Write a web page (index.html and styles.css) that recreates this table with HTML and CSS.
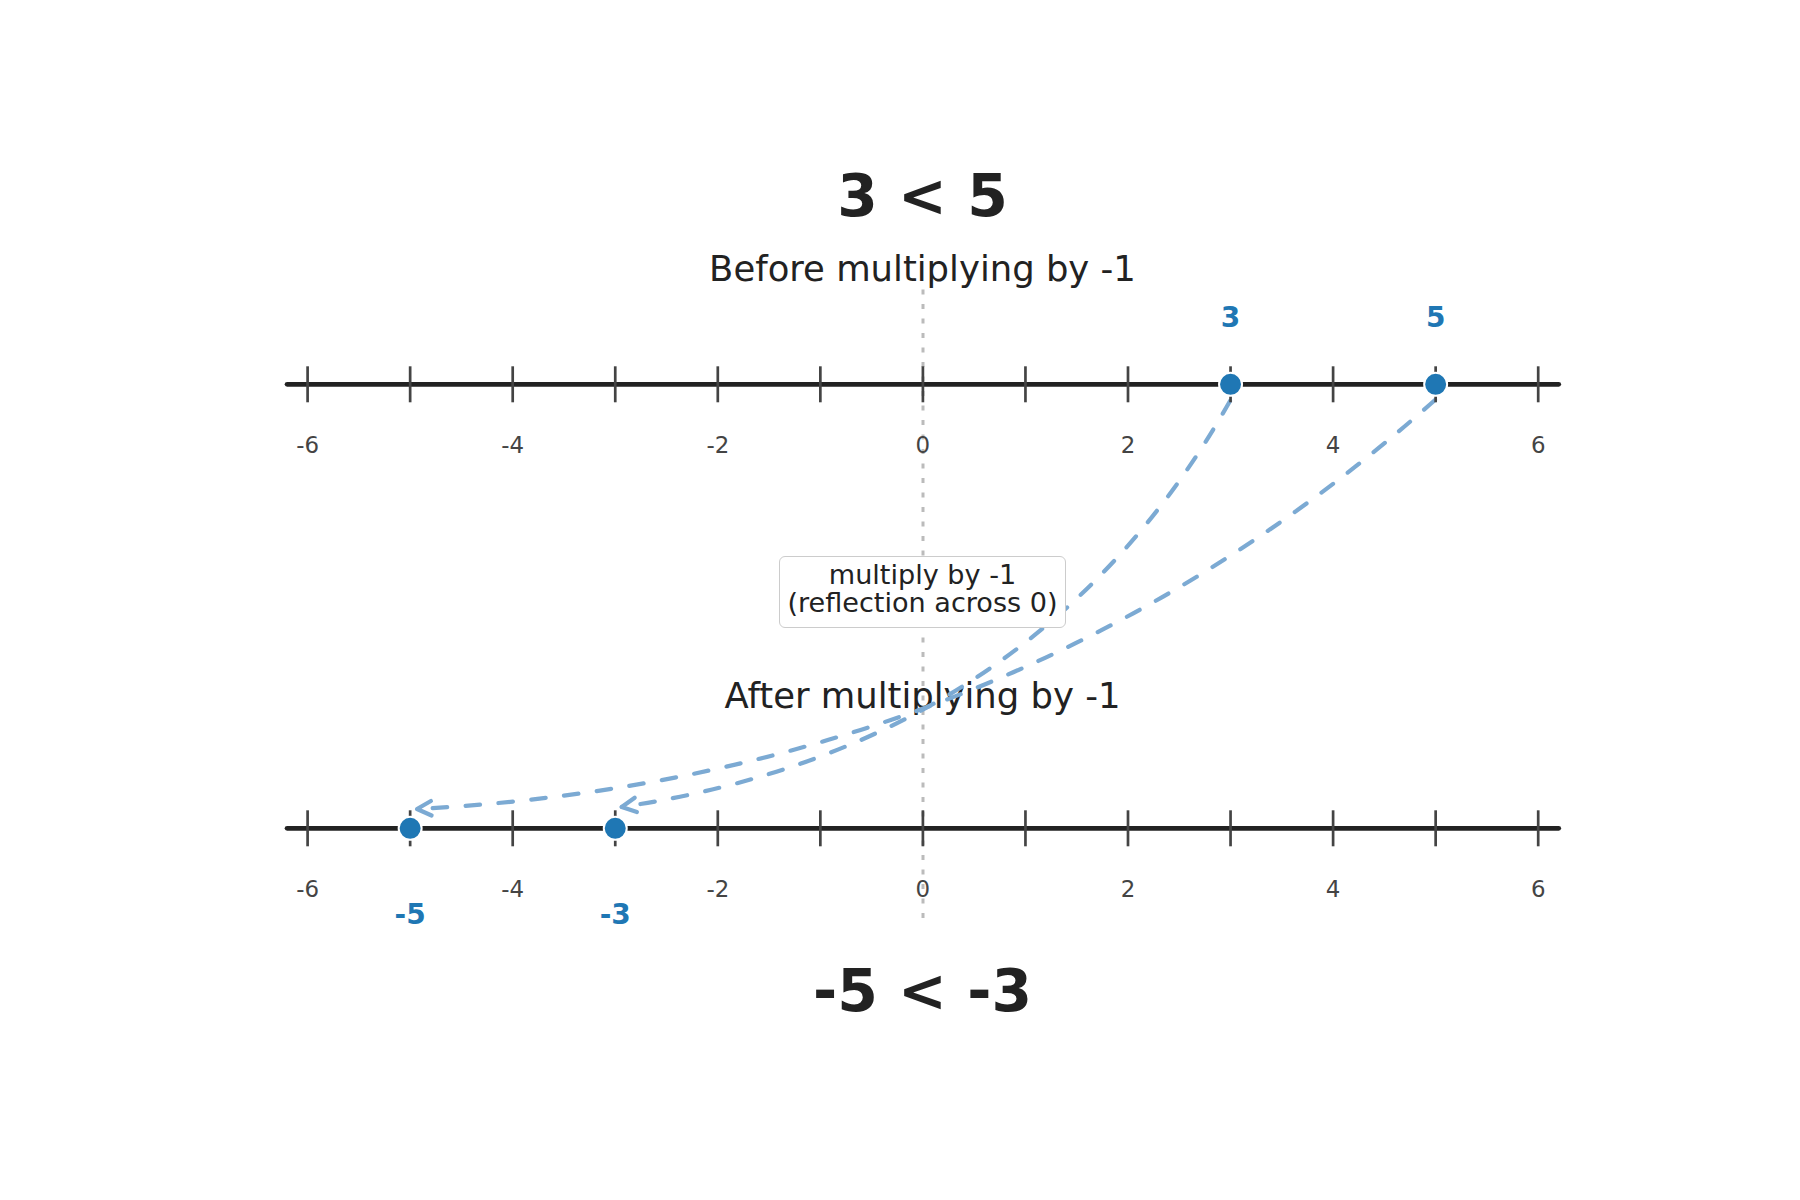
FILE: index.html
```html
<!DOCTYPE html>
<html lang="en">
<head>
<meta charset="utf-8">
<title>Multiplying an inequality by -1</title>
<link rel="stylesheet" href="styles.css">
</head>
<body>
<div class="figure">
  <svg class="overlay" width="1800" height="1200" viewBox="0 0 1800 1200">
    <line class="zero-line" x1="923" y1="289.5" x2="923" y2="920"/>
    <path class="flip" d="M 1230 401 Q 1035.7 745.3 621.7 807"/>
    <path class="flip" d="M 1435 400 Q 1010 778 417 809"/>
    <polyline class="flip-head" points="636.9,812.1 621.7,807 634.7,797.7"/>
    <polyline class="flip-head" points="431.6,815.5 417,809 430.9,801"/>
  </svg>

  <div class="title">3 &lt; 5</div>
  <div class="subtitle">Before multiplying by -1</div>

  <svg class="numberline" width="1755" height="190" viewBox="0 0 1755 190">
    <line class="axis" x1="242.1" y1="94.3" x2="1513.7" y2="94.3"/>
    <g class="ticks">
      <line x1="262.6" y1="76.3" x2="262.6" y2="112.3"/>
      <line x1="365.15" y1="76.3" x2="365.15" y2="112.3"/>
      <line x1="467.7" y1="76.3" x2="467.7" y2="112.3"/>
      <line x1="570.25" y1="76.3" x2="570.25" y2="112.3"/>
      <line x1="672.8" y1="76.3" x2="672.8" y2="112.3"/>
      <line x1="775.35" y1="76.3" x2="775.35" y2="112.3"/>
      <line x1="877.9" y1="76.3" x2="877.9" y2="112.3"/>
      <line x1="980.45" y1="76.3" x2="980.45" y2="112.3"/>
      <line x1="1083" y1="76.3" x2="1083" y2="112.3"/>
      <line x1="1185.55" y1="76.3" x2="1185.55" y2="112.3"/>
      <line x1="1288.1" y1="76.3" x2="1288.1" y2="112.3"/>
      <line x1="1390.65" y1="76.3" x2="1390.65" y2="112.3"/>
      <line x1="1493.2" y1="76.3" x2="1493.2" y2="112.3"/>
    </g>
    <g class="tick-labels">
      <text x="262.6" y="163.3">-6</text>
      <text x="467.7" y="163.3">-4</text>
      <text x="672.8" y="163.3">-2</text>
      <text x="877.9" y="163.3">0</text>
      <text x="1083" y="163.3">2</text>
      <text x="1288.1" y="163.3">4</text>
      <text x="1493.2" y="163.3">6</text>
    </g>
    <circle class="dot" cx="1185.55" cy="94.3" r="11.5"/>
    <circle class="dot" cx="1390.65" cy="94.3" r="11.5"/>
    <text class="dot-label" x="1185.55" y="37">3</text>
    <text class="dot-label" x="1390.65" y="37">5</text>
  </svg>

  <div class="note">
    <div>multiply by -1</div>
    <div>(reflection across 0)</div>
  </div>

  <div class="subtitle after">After multiplying by -1</div>

  <svg class="numberline bottom" width="1755" height="206" viewBox="0 0 1755 206">
    <line class="axis" x1="242.1" y1="94.3" x2="1513.7" y2="94.3"/>
    <g class="ticks">
      <line x1="262.6" y1="76.3" x2="262.6" y2="112.3"/>
      <line x1="365.15" y1="76.3" x2="365.15" y2="112.3"/>
      <line x1="467.7" y1="76.3" x2="467.7" y2="112.3"/>
      <line x1="570.25" y1="76.3" x2="570.25" y2="112.3"/>
      <line x1="672.8" y1="76.3" x2="672.8" y2="112.3"/>
      <line x1="775.35" y1="76.3" x2="775.35" y2="112.3"/>
      <line x1="877.9" y1="76.3" x2="877.9" y2="112.3"/>
      <line x1="980.45" y1="76.3" x2="980.45" y2="112.3"/>
      <line x1="1083" y1="76.3" x2="1083" y2="112.3"/>
      <line x1="1185.55" y1="76.3" x2="1185.55" y2="112.3"/>
      <line x1="1288.1" y1="76.3" x2="1288.1" y2="112.3"/>
      <line x1="1390.65" y1="76.3" x2="1390.65" y2="112.3"/>
      <line x1="1493.2" y1="76.3" x2="1493.2" y2="112.3"/>
    </g>
    <g class="tick-labels">
      <text x="262.6" y="163.3">-6</text>
      <text x="467.7" y="163.3">-4</text>
      <text x="672.8" y="163.3">-2</text>
      <text x="877.9" y="163.3">0</text>
      <text x="1083" y="163.3">2</text>
      <text x="1288.1" y="163.3">4</text>
      <text x="1493.2" y="163.3">6</text>
    </g>
    <circle class="dot" cx="365.15" cy="94.3" r="11.5"/>
    <circle class="dot" cx="570.25" cy="94.3" r="11.5"/>
    <text class="dot-label" x="365.15" y="190">-5</text>
    <text class="dot-label" x="570.25" y="190">-3</text>
  </svg>

  <div class="title bottom">-5 &lt; -3</div>
</div>
</body>
</html>
```

FILE: styles.css
```css
html, body {
  margin: 0;
  padding: 0;
  background: #ffffff;
}

.figure {
  position: relative;
  width: 1800px;
  height: 1200px;
  box-sizing: border-box;
  padding: 144.1px 0 0 45px;
  display: flex;
  flex-direction: column;
  align-items: center;
  font-family: "DejaVu Sans", "Liberation Sans", sans-serif;
  color: #222222;
  overflow: hidden;
}

.overlay {
  position: absolute;
  left: 0;
  top: 0;
  width: 1800px;
  height: 1200px;
  pointer-events: none;
}

.zero-line {
  stroke: #bbbbbb;
  stroke-width: 3;
  stroke-dasharray: 5 9.5;
  fill: none;
}

.flip {
  fill: none;
  stroke: #7caad3;
  stroke-width: 4.2;
  stroke-linecap: round;
  stroke-dasharray: 14.5 18.5;
}

.flip-head {
  fill: none;
  stroke: #7caad3;
  stroke-width: 4.2;
  stroke-linecap: round;
  stroke-linejoin: round;
}

.title {
  font-size: 58.33px;
  font-weight: bold;
  line-height: 105.4px;
  height: 105.4px;
  white-space: nowrap;
  flex: none;
}

.title.bottom {
  margin-top: 11.5px;
  line-height: 80px;
  height: 80px;
}

.subtitle {
  font-size: 35.42px;
  line-height: 40.5px;
  height: 40.5px;
  white-space: nowrap;
  flex: none;
}

.subtitle.after {
  margin-top: 30.1px;
  line-height: 75.9px;
  height: 75.9px;
}

.numberline {
  display: block;
  position: relative;
  z-index: 1;
  width: 1755px;
  height: 190px;
  overflow: visible;
  flex: none;
}

.numberline.bottom {
  height: 206px;
}

.axis {
  stroke: #222222;
  stroke-width: 4.8;
  stroke-linecap: round;
}

.ticks line {
  stroke: #444444;
  stroke-width: 2.7;
}

.tick-labels text {
  font-family: "DejaVu Sans", "Liberation Sans", sans-serif;
  font-size: 22.92px;
  fill: #444444;
  text-anchor: middle;
}

.dot {
  fill: #1f77b4;
  stroke: #ffffff;
  stroke-width: 2;
}

.dot-label {
  font-family: "DejaVu Sans", "Liberation Sans", sans-serif;
  font-size: 28px;
  font-weight: bold;
  fill: #1f77b4;
  text-anchor: middle;
}

.note {
  position: relative;
  z-index: 2;
  margin-top: 76px;
  width: 287px;
  height: 72px;
  box-sizing: border-box;
  padding-top: 3.9px;
  border: 1.5px solid #cccccc;
  border-radius: 6px;
  background: #ffffff;
  font-size: 27.08px;
  line-height: 28.5px;
  text-align: center;
  white-space: nowrap;
  flex: none;
}
```
